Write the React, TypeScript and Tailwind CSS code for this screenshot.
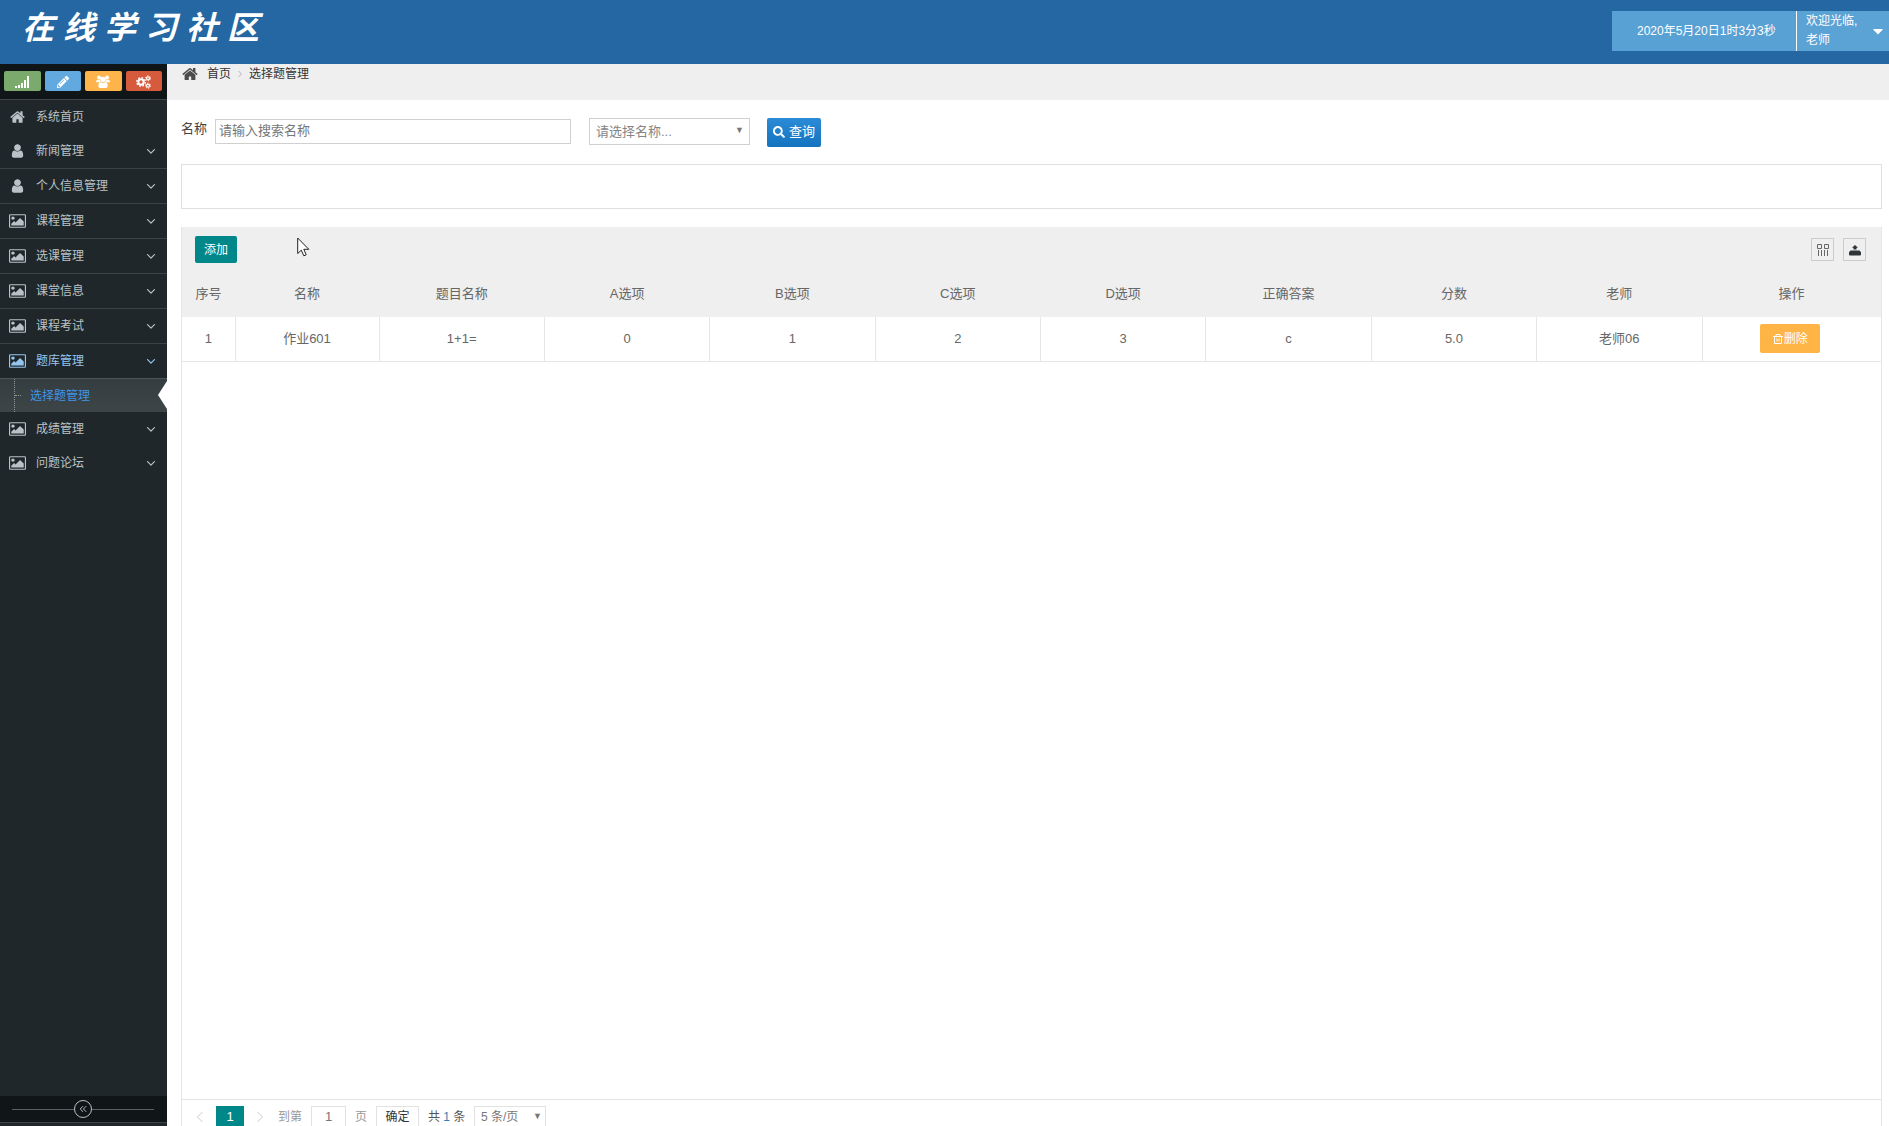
import { FaCaretDown, FaPencilAlt, FaSearch } from 'react-icons/fa'

const paths = {
  home: 'M1472 992v480q0 26-19 45t-45 19H1024v-384H768v384H384q-26 0-45-19t-19-45V992q0-1 .5-3t.5-3l575-474 575 474q1 2 1 6zm223-69l-62 74q-8 9-21 11h-3q-13 0-21-7L896 424l-692 577q-12 8-24 7-13-2-21-11l-62-74q-8-10-7-23.5t11-21.5l719-599q32-26 76-26t76 26l244 204V288q0-14 9-23t23-9h192q14 0 23 9t9 23v408l219 182q10 8 11 21.5t-7 23.5z',
  user: 'M1536 1399q0 109-62.5 187t-150.5 78H469q-88 0-150.5-78T256 1399q0-85 8.5-160.5t31.5-152 58.5-131 94-89T583 832q131 128 313 128t313-128q76 0 134.5 34.5t94 89 58.5 131 31.5 152 8.5 160.5zm-256-887q0 159-112.5 271.5T896 896 624.5 783.5 512 512t112.5-271.5T896 128t271.5 112.5T1280 512z',
  picture:
    'M576 576q0 80-56 136t-136 56-136-56-56-136 56-136 136-56 136 56 56 136zm1024 384v448H192v-192l320-320 160 160 512-512zm96-704H96q-13 0-22.5 9.5T64 288v1216q0 13 9.5 22.5t22.5 9.5h1600q13 0 22.5-9.5t9.5-22.5V288q0-13-9.5-22.5T1696 256zm160 32v1216q0 66-47 113t-113 47H96q-66 0-113-47t-47-113V288q0-66 47-113t113-47h1600q66 0 113 47t47 113z',
  angle:
    'M1395 736q0 13-10 23l-466 466q-10 10-23 10t-23-10L407 759q-10-10-10-23t10-23l50-50q10-10 23-10t23 10l393 393 393-393q10-10 23-10t23 10l50 50q10 10 10 23z',
}

type IconName = keyof typeof paths

function Icon({ name, className }: { name: IconName; className?: string }) {
  return (
    <svg viewBox="-64 0 1920 1792" fill="currentColor" className={className} aria-hidden="true">
      <path d={paths[name]} />
    </svg>
  )
}

function SignalIcon() {
  return (
    <svg viewBox="0 0 14 12" className="w-3.5 h-3" fill="currentColor" aria-hidden="true">
      <path d="M0 10h2v2H0zM3 9h2v3H3zM6 7h2v5H6zM9 4h2v8H9zM12 0h2v12h-2z" />
    </svg>
  )
}

function UsersIcon() {
  return (
    <svg viewBox="0 0 14 13" className="w-3.5 h-[13px]" fill="currentColor" aria-hidden="true">
      <circle cx="3" cy="2.500" r="2" />
      <circle cx="11" cy="2.500" r="2" />
      <circle cx="7" cy="4.500" r="2.700" />
      <path d="M0 7.500Q0 4.700 1.500 4.700h2.300Q4 6.300 5 7.300H0zM14 7.500q0-2.800-1.500-2.800h-2.300Q10 6.300 9 7.300h5zM2.300 10.800q0-3.500 2.400-3.500Q7 8.800 9.300 7.300q2.400 0 2.400 3.500 0 2.200-1.800 2.200H4.100q-1.800 0-1.800-2.200z" />
    </svg>
  )
}

function CogsIcon() {
  return (
    <svg viewBox="0 0 15 14" className="w-[15px] h-3.5" fill="none" stroke="currentColor" aria-hidden="true">
      <circle cx="5" cy="7" r="2.700" strokeWidth="2" />
      <circle cx="5" cy="7" r="4.300" strokeWidth="1.300" strokeDasharray="1.700 1.677" />
      <circle cx="12" cy="3.300" r="1.500" strokeWidth="1.300" />
      <circle cx="12" cy="3.300" r="2.500" strokeDasharray="1.300 1.318" />
      <circle cx="12" cy="10.700" r="1.500" strokeWidth="1.300" />
      <circle cx="12" cy="10.700" r="2.500" strokeDasharray="1.300 1.318" />
    </svg>
  )
}

const menu: { label: string; icon: IconName; line?: boolean; open?: boolean }[] = [
  { label: '系统首页', icon: 'home' },
  { label: '新闻管理', icon: 'user' },
  { label: '个人信息管理', icon: 'user', line: true },
  { label: '课程管理', icon: 'picture', line: true },
  { label: '选课管理', icon: 'picture', line: true },
  { label: '课堂信息', icon: 'picture', line: true },
  { label: '课程考试', icon: 'picture', line: true },
  { label: '题库管理', icon: 'picture', line: true, open: true },
  { label: '成绩管理', icon: 'picture' },
  { label: '问题论坛', icon: 'picture' },
]

const shortcuts = [
  { label: '统计', color: 'bg-[#7aab6c]', Glyph: SignalIcon },
  { label: '编辑', color: 'bg-[#62a9df]', Glyph: FaPencilAlt },
  { label: '用户', color: 'bg-[#ffb44b]', Glyph: UsersIcon },
  { label: '设置', color: 'bg-[#d55b3c]', Glyph: CogsIcon },
]

const columns = ['序号', '名称', '题目名称', 'A选项', 'B选项', 'C选项', 'D选项', '正确答案', '分数', '老师', '操作']
const rows = [['1', '作业601', '1+1=', '0', '1', '2', '3', 'c', '5.0', '老师06']]

function Header() {
  return (
    <header className="h-16 shrink-0 flex items-start justify-between bg-[#2467a2] text-white">
      <h1 className="flex gap-[9px] pl-[22px] pt-1 text-[32px] leading-[48px] font-bold italic">
        {[...'在线学习社区'].map((char) => (
          <span key={char}>{char}</span>
        ))}
      </h1>
      <div className="mt-[11px] flex h-10 text-xs">
        <div className="w-[184px] pl-[25px] flex items-center bg-[#58a1d4]">2020年5月20日1时3分3秒</div>
        <button className="w-[93px] pl-[9px] pr-[5px] flex items-center justify-between border-l border-white bg-[#5ba3d5] text-left leading-[19px]">
          <span>
            欢迎光临,
            <br />
            老师
          </span>
          <FaCaretDown className="w-3 h-4" />
        </button>
      </div>
    </header>
  )
}

function Sidebar() {
  return (
    <aside className="w-[167px] shrink-0 flex flex-col bg-[#20272a] text-[#b9c2c6] text-xs">
      <div className="h-9 pl-1 pr-[5px] pt-[7px] flex items-start gap-1 bg-[#101618] border-b border-[#3d4548]">
        {shortcuts.map(({ label, color, Glyph }) => (
          <button
            key={label}
            aria-label={label}
            className={`h-5 flex-1 flex items-center justify-center rounded-xs pt-px text-white ${color}`}
          >
            <Glyph />
          </button>
        ))}
      </div>
      <nav className="flex-1">
        <ul>
          {menu.map(({ label, icon, line, open }) => (
            <li key={label}>
              <a
                href="#"
                className={`flex items-center pl-[9px] pr-2 ${line ? 'h-[35px] border-t border-[#3a4346]' : 'h-[34px]'} ${open ? 'text-[#93c5ee]' : ''}`}
              >
                <Icon name={icon} className="w-[17px] h-4 mr-2.5" />
                <span className="flex-1">{label}</span>
                {icon !== 'home' && <Icon name="angle" className="size-4" />}
              </a>
              {open && (
                <ul>
                  <li className="relative h-[34px] flex items-center pl-3.5 border-t border-[#4c5558] bg-linear-to-b from-[#343d3f] to-[#3d4547]">
                    <span className="h-full border-l border-dotted border-[#8c9699]" />
                    <span className="w-1.5 border-t border-dotted border-[#8c9699]" />
                    <a href="#" className="pl-[9px] text-[#3f95e6]">
                      选择题管理
                    </a>
                    <svg viewBox="0 0 9 28" className="absolute right-0 top-0.5 w-[9px] h-7 text-white" aria-hidden="true">
                      <path d="M9 0v28L0 14z" fill="currentColor" />
                    </svg>
                  </li>
                </ul>
              )}
            </li>
          ))}
        </ul>
      </nav>
      <div className="h-[26px] pl-3 pr-[13px] flex items-center bg-[#101618]">
        <span className="flex-1 border-t border-[#596165]" />
        <button aria-label="收起菜单" className="size-[18px] flex items-center justify-center rounded-full border border-[#b9c2c6]">
          <svg viewBox="0 0 10 10" className="size-2" fill="none" stroke="currentColor" strokeWidth="1.200" aria-hidden="true">
            <path d="M5 1.500 1.500 5 5 8.500M9 1.500 5.500 5 9 8.500" />
          </svg>
        </button>
        <span className="flex-1 border-t border-[#596165]" />
      </div>
      <div className="h-1 border-t border-[#3d4548]" />
    </aside>
  )
}

function SearchForm() {
  return (
    <form className="flex items-start pt-[18px]">
      <label htmlFor="keyword" className="w-[34px] pt-px text-[13px] leading-5 text-[#444]">
        名称
      </label>
      <input
        id="keyword"
        placeholder="请输入搜索名称"
        className="w-[356px] h-[25px] mt-px px-[3px] pb-0.5 border border-[#d0d0d0] text-[13px] placeholder:text-[#777]"
      />
      <div className="relative ml-[18px]">
        <select aria-label="请选择名称" className="w-[161px] h-[27px] pl-1.5 appearance-none border border-[#d0d0d0] text-[13px] text-[#858585]">
          <option>请选择名称...</option>
        </select>
        <span className="absolute right-1.5 top-1.5 text-[9px] leading-3 text-[#777] pointer-events-none">▼</span>
      </div>
      <button
        type="button"
        className="ml-[17px] w-[54px] h-[29px] pb-0.5 flex items-center justify-center gap-1 rounded-xs bg-linear-to-b from-[#2b8bd6] to-[#1273c0] text-[13px] text-white"
      >
        <FaSearch className="size-3" />
        查询
      </button>
    </form>
  )
}

function QuestionTable() {
  return (
    <table className="w-full table-fixed text-[13px] text-[#666] text-center">
      <colgroup>
        <col className="w-[53px]" />
        <col className="w-36" />
        {columns.slice(3).map((name) => (
          <col key={name} />
        ))}
        <col className="w-[179px]" />
      </colgroup>
      <thead className="bg-[#efefef]">
        <tr className="h-[45px]">
          {columns.map((name) => (
            <th key={name} className="pb-px font-normal">
              {name}
            </th>
          ))}
        </tr>
      </thead>
      <tbody>
        {rows.map((row) => (
          <tr key={row[0]} className="h-11 border-b border-[#e6e6e6]">
            {row.map((cell, i) => (
              <td key={columns[i]} className="border-r border-[#e6e6e6]">
                {cell}
              </td>
            ))}
            <td>
              <button className="w-[60px] h-[29px] mr-1 inline-flex items-center justify-center align-middle rounded-xs bg-[#ffb545] text-xs text-white">
                <svg viewBox="0 0 12 12" className="size-3" fill="none" stroke="currentColor" aria-hidden="true">
                  <path d="M1 3.500h10M4 3V1.500h4V3M2.500 3.500v7h7v-7M5 5.500v3M7 5.500v3" />
                </svg>
                删除
              </button>
            </td>
          </tr>
        ))}
      </tbody>
    </table>
  )
}

function Pager() {
  return (
    <div className="shrink-0 flex items-start h-[27px] pt-1.5 pl-0.5 border-t border-[#e2e2e2] text-[13px] leading-[22px] text-[#999]">
      <button aria-label="上一页" className="w-8 h-[22px] flex items-center justify-center text-[#ccc]">
        <svg viewBox="0 0 8 12" className="w-2 h-3" fill="none" stroke="currentColor" aria-hidden="true">
          <path d="M6.500 1 1.500 6l5 5" />
        </svg>
      </button>
      <button className="w-7 h-[22px] bg-[#00878a] text-white">1</button>
      <button aria-label="下一页" className="w-8 h-[22px] flex items-center justify-center text-[#ccc]">
        <svg viewBox="0 0 8 12" className="w-2 h-3" fill="none" stroke="currentColor" aria-hidden="true">
          <path d="m1.500 1 5 5-5 5" />
        </svg>
      </button>
      <label className="flex text-xs leading-[22px]">
        <span className="w-[35px] pl-0.5">到第</span>
        <input defaultValue="1" className="w-[35px] h-[22px] border border-[#e2e2e2] text-center text-[13px] text-[#777]" />
        <span className="w-[30px] pl-[9px]">页</span>
      </label>
      <button className="w-[43px] h-[22px] border border-[#e2e2e2] text-xs text-[#333]">确定</button>
      <span className="w-[55px] pl-[9px] text-xs leading-[22px] text-[#555]">
        共 <span className="text-[#2b82b8]">1</span> 条
      </span>
      <div className="relative">
        <select aria-label="每页条数" className="w-[72px] h-[22px] pl-1.5 appearance-none border border-[#e2e2e2] text-xs text-[#777]">
          <option>5 条/页</option>
        </select>
        <span className="absolute right-1 top-1 text-[9px] leading-3 text-[#777] pointer-events-none">▼</span>
      </div>
    </div>
  )
}

function Main() {
  return (
    <main className="flex-1 min-w-0 flex flex-col">
      <nav className="h-9 shrink-0 pl-3.5 flex items-start bg-[#f0efef] text-xs leading-5 text-[#333]">
        <Icon name="home" className="w-[18px] h-5 mr-2 text-[#4c4c4c]" />
        <a href="#">首页</a>
        <svg viewBox="0 0 6 10" className="w-1.5 h-5 mx-1.5" fill="none" stroke="#b2b6bf" aria-hidden="true">
          <path d="m1.500 2 3 3-3 3" />
        </svg>
        <span>选择题管理</span>
      </nav>
      <div className="flex-1 min-h-0 flex flex-col pl-3.5 pr-[7px]">
        <SearchForm />
        <div className="h-[45px] shrink-0 mt-[17px] border border-[#e0e0e4]" />
        <section className="flex-1 min-h-0 flex flex-col mt-[18px] border-x border-[#e6e6e6]">
          <div className="h-[45px] shrink-0 pl-[13px] pr-[15px] pt-[9px] flex items-start justify-between bg-[#efefef]">
            <button className="w-[42px] h-[27px] rounded-xs bg-[#00878a] text-xs text-white">添加</button>
            <div className="flex gap-[9px] pt-0.5">
              <button aria-label="筛选列" className="size-[23px] flex items-center justify-center border border-[#ccc] text-[#666]">
                <svg viewBox="0 0 12 12" className="size-3" fill="none" stroke="currentColor" aria-hidden="true">
                  <path d="M.5.5h4v4h-4zM7.500.5h4v4h-4zM1.500 6v6M4.500 6v6M7.500 6v6M10.500 6v6" />
                </svg>
              </button>
              <button aria-label="导出" className="size-[23px] flex items-center justify-center border border-[#ccc] text-[#2f3238]">
                <svg viewBox="0 0 12 12" className="size-3" fill="currentColor" aria-hidden="true">
                  <path d="M6 1 9 3.800H7.500v1.700h-3V3.800H3zM1.500 6.500h9L12 8.200v2.300q0 1-1 1H1q-1 0-1-1V8.200z" />
                </svg>
              </button>
            </div>
          </div>
          <QuestionTable />
          <div className="flex-1" />
          <Pager />
        </section>
      </div>
    </main>
  )
}

export default function App() {
  return (
    <div className="relative h-screen flex flex-col overflow-hidden bg-white font-['Liberation_Sans','Noto_Sans_CJK_SC',sans-serif]">
      <Header />
      <div className="flex-1 min-h-0 flex">
        <Sidebar />
        <Main />
      </div>
      {/* Mouse pointer */}
      <svg viewBox="0 0 13 20" className="absolute left-[297px] top-[237px] w-[13px] h-5" fill="#fff" stroke="#222" aria-hidden="true">
        <path d="M.7 1v15.500l3.600-3.300 2.500 5.600 2.400-1-2.400-5.500h5z" />
      </svg>
    </div>
  )
}
